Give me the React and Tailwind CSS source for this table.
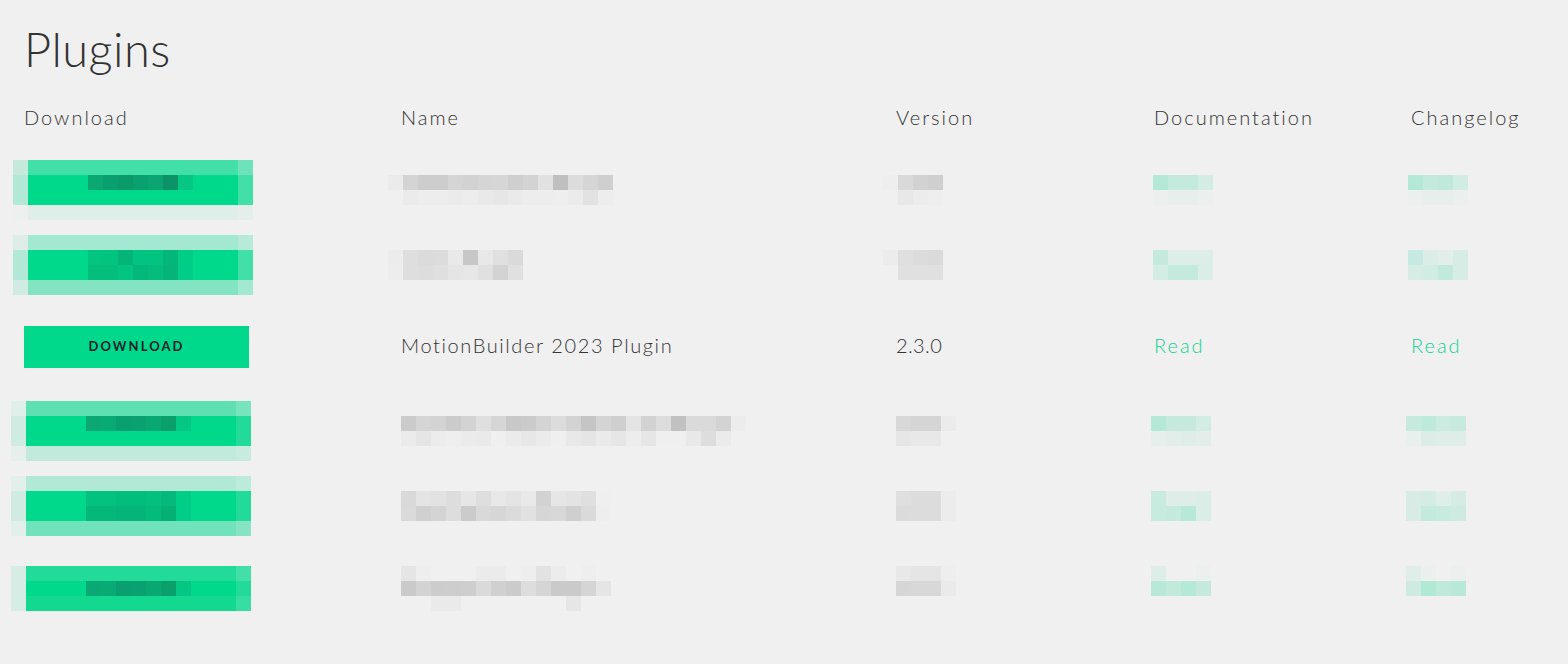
import React from "react";

const G = "#00d98b";

// pixelated (censored) rows, colours sampled cell by cell, 15px cells
const blurredRows = [
    {
        offset: { dl: "-mt-[6px] -ml-[11px]", other: "mt-[9px]", name: "-ml-[13px]", ver: "-ml-[13px]", doc: "-ml-[1px]", chg: "-ml-[3px]" },
        dl: [
            ["#c5eadc", ...Array(14).fill("#42dfa8"), "#6ee3bb"],
            ["#b2e9d6", G, G, G, G, "#0ca874", "#0a9f6e", "#0b9b6a", "#0aa170", "#0ba572", "#0c9468", "#05c682", G, G, G, "#42dfa8"],
            ["#b2e9d6", ...Array(14).fill(G), "#42dfa8"],
            ["#eef0ef", ...Array(14).fill("#e0eeea"), "#e6eeeb"],
        ],
        name: [
            ["#ebebeb", "#d4d4d4", "#cdcdcd", "#cdcdcd", "#d5d5d5", "#d2d2d2", "#d5d5d5", "#d6d6d6", "#cfcfcf", "#d3d3d3", "#e1e1e1", "#bfbfbf", "#dcdcdc", "#d5d5d5", "#cfcfcf"],
            ["#f0f0f0", "#ebebeb", "#ededed", "#ededed", "#ebebeb", "#ededed", "#e9e9e9", "#e6e6e6", "#eaeaea", "#ededed", "#ededed", "#eeeeee", "#ebebeb", "#e2e2e2", "#ededed"],
        ],
        ver: [
            ["#eeeeee", "#d9d9d9", "#d2d2d2", "#cfcfcf"],
            ["#f0f0f0", "#e8e8e8", "#ececec", "#eeeeee"],
        ],
        doc: [
            ["#b3e9d6", "#c3eadd", "#c3eadd", "#d3ece4"],
            ["#ebefee", "#e8eeec", "#e8eeec", "#ebefee"],
        ],
        chg: [
            ["#b3e9d6", "#c3eadd", "#c0e9db", "#d0ece3"],
            ["#ebefee", "#e8eeec", "#e8eeec", "#ebefee"],
        ],
    },
    {
        offset: { dl: "-mt-[11px] -ml-[11px]", other: "mt-[4px]", name: "-ml-[13px]", ver: "-ml-[13px]", doc: "-ml-[1px]", chg: "-ml-[3px]" },
        dl: [
            ["#ddeee8", ...Array(14).fill("#a3e9d1"), "#b7ead8"],
            ["#b2e9d6", G, G, G, G, "#03c57f", "#02c47e", "#05b478", "#01c482", "#02c380", "#05b67a", "#00ce87", G, G, G, "#42dfa8"],
            ["#b2e9d6", G, G, G, G, "#04bf7c", "#04be7c", "#02c582", "#03b87a", "#04bc7c", "#05b478", "#00cd87", G, G, G, "#42dfa8"],
            ["#d0ece2", ...Array(14).fill("#82e4c3"), "#a3e9d1"],
        ],
        name: [
            ["#ececec", "#dedede", "#dbdbdb", "#dcdcdc", "#e9e9e9", "#c7c7c7", "#e8e8e8", "#e0e0e0", "#dadada"],
            ["#ededed", "#dedede", "#dddddd", "#dfdfdf", "#e5e5e5", "#e7e7e7", "#e0e0e0", "#d3d3d3", "#e0e0e0"],
        ],
        ver: [
            ["#ececec", "#dfdfdf", "#dcdcdc", "#dadada"],
            ["#f0f0f0", "#e0e0e0", "#e0e0e0", "#e0e0e0"],
        ],
        doc: [
            ["#c3eadd", "#ddede8", "#ddede8", "#ddede8"],
            ["#d3ece4", "#c3eadd", "#c3eadd", "#dbede7"],
        ],
        chg: [
            ["#c6eadf", "#dcede7", "#e2eee9", "#d7ece5"],
            ["#d7ece5", "#d0ece3", "#c1eadc", "#d7ece5"],
        ],
    },
    null,
    {
        offset: { dl: "-mt-[5px] -ml-[13px]", other: "mt-[10px]", name: "ml-0", ver: "ml-0", doc: "-ml-[3px]", chg: "-ml-[5px]" },
        dl: [
            ["#dff0ea", ...Array(14).fill("#5fe0b3"), "#77e4bd"],
            ["#d0ece2", G, G, G, G, "#0ca874", "#08ab73", "#0a9f6e", "#0aa170", "#09a873", "#0a9f6b", "#05c682", G, G, G, "#22db98"],
            ["#d0ece2", ...Array(14).fill(G), "#22db98"],
            ["#e6efec", ...Array(14).fill("#c1eadc"), "#c8ebdf"],
        ],
        name: [
            ["#cbcbcb", "#d5d5d5", "#d3d3d3", "#cbcbcb", "#d3d3d3", "#dfdfdf", "#d6d6d6", "#c8c8c8", "#cbcbcb", "#d4d4d4", "#dcdcdc", "#d3d3d3", "#c5c5c5", "#d4d4d4", "#cfcfcf", "#e4e4e4", "#d2d2d2", "#dddddd", "#c1c1c1", "#dadada", "#dadada", "#d3d3d3", "#ececec"],
            ["#ebebeb", "#e5e5e5", "#ececec", "#eeeeee", "#ebebeb", "#eaeaea", "#efefef", "#ebebeb", "#e7e7e7", "#ebebeb", "#efefef", "#e8e8e8", "#e5e5e5", "#eaeaea", "#e6e6e6", "#ededed", "#e6e6e6", "#efefef", "#efefef", "#e8e8e8", "#dddddd", "#ebebeb", "#f0f0f0"],
        ],
        ver: [
            ["#d8d8d8", "#d5d5d5", "#d5d5d5", "#ebebeb"],
            ["#e6e6e6", "#e8e8e8", "#e8e8e8", "#f0f0f0"],
        ],
        doc: [
            ["#b3e9d6", "#c5eadd", "#c5eadd", "#d3ece4"],
            ["#e6efec", "#e3eeea", "#dfede8", "#e3eeea"],
        ],
        chg: [
            ["#c6eadd", "#bdeadb", "#ccebe1", "#c6eadd"],
            ["#e8efec", "#dcede7", "#dfede8", "#dfede8"],
        ],
    },
    {
        offset: { dl: "-mt-[10px] -ml-[13px]", other: "mt-[5px]", name: "ml-0", ver: "ml-0", doc: "-ml-[3px]", chg: "-ml-[5px]" },
        dl: [
            ["#e3efeb", ...Array(14).fill("#b1e9d6"), "#bcebdb"],
            ["#d0ece2", G, G, G, G, "#03c17e", "#03c17e", "#02be7d", "#02be7d", "#03c07e", "#04b97b", "#00ce87", G, G, G, "#22db98"],
            ["#d0ece2", G, G, G, G, "#04b87a", "#04b87a", "#05b478", "#05b478", "#03bb7b", "#05b074", "#00cd87", G, G, G, "#22db98"],
            ["#e2efeb", ...Array(14).fill("#70e3bc"), "#86e4c4"],
        ],
        name: [
            ["#d9d9d9", "#e4e4e4", "#e2e2e2", "#dddddd", "#e6e6e6", "#dedede", "#e8e8e8", "#e4e4e4", "#e9e9e9", "#d2d2d2", "#e6e6e6", "#e3e3e3", "#dfdfdf", "#efefef"],
            ["#dadada", "#d0d0d0", "#d4d4d4", "#dddddd", "#cbcbcb", "#d9d9d9", "#d6d6d6", "#dbdbdb", "#e1e1e1", "#d6d6d6", "#d8d8d8", "#cfcfcf", "#dadada", "#eeeeee"],
        ],
        ver: [
            ["#dfdfdf", "#dcdcdc", "#dcdcdc", "#ececec"],
            ["#dbdbdb", "#dcdcdc", "#dcdcdc", "#ececec"],
        ],
        doc: [
            ["#c8ebdf", "#dfede8", "#dfede8", "#dbede7"],
            ["#c8ebdf", "#c3eadd", "#b8e9d8", "#dbede7"],
        ],
        chg: [
            ["#d8ece5", "#d5ece4", "#e0eee9", "#d5ece4"],
            ["#d8ece5", "#c3eadd", "#c8ebdf", "#cdebe1"],
        ],
    },
    {
        offset: { dl: "mt-0 -ml-[13px]", other: "mt-0", name: "ml-0", ver: "ml-0", doc: "-ml-[3px]", chg: "-ml-[5px]" },
        dl: [
            ["#d5ede5", ...Array(14).fill("#22db98"), "#42dfa8"],
            ["#d5ede5", G, G, G, G, "#0aa874", "#08ab73", "#0a9f6e", "#0aa170", "#09a873", "#0a9f6b", "#05c682", G, G, G, "#22db98"],
            ["#d5ede5", ...Array(14).fill("#12d890"), "#36dea3"],
        ],
        name: [
            ["#e5e5e5", "#eeeeee", "#f0f0f0", "#f0f0f0", "#f0f0f0", "#ebebeb", "#ebebeb", "#f0f0f0", "#eeeeee", "#e2e2e2", "#ececec", "#f0f0f0", "#eeeeee", "#f0f0f0"],
            ["#cacaca", "#d3d3d3", "#cccccc", "#cdcdcd", "#cecece", "#dadada", "#d0d0d0", "#cbcbcb", "#dddddd", "#d5d5d5", "#cacaca", "#cacaca", "#d5d5d5", "#e5e5e5"],
            ["#f0f0f0", "#f0f0f0", "#eaeaea", "#eaeaea", "#f0f0f0", "#f0f0f0", "#f0f0f0", "#f0f0f0", "#f0f0f0", "#f0f0f0", "#f0f0f0", "#e6e6e6", "#f0f0f0", "#f0f0f0"],
        ],
        ver: [
            ["#e8e8e8", "#e5e5e5", "#e5e5e5", "#eeeeee"],
            ["#d6d6d6", "#d8d8d8", "#d8d8d8", "#eaeaea"],
        ],
        doc: [
            ["#ddede8", "#f0f0f0", "#f0f0f0", "#ebefee"],
            ["#b8e9d8", "#c1eadb", "#b3e9d6", "#c5eadd"],
        ],
        chg: [
            ["#e0eee9", "#ebefee", "#f0f0f0", "#ebefee"],
            ["#cdebe1", "#b0e9d4", "#bfeadb", "#b8e9d8"],
        ],
    },
];

function Mosaic({ rows, className }) {
    return (
        <div className={`flex flex-col ${className}`}>
            {rows.map((row, i) => (
                <div key={i} className="flex">
                    {row.map((c, j) => (
                        <div key={j} className="w-[15px] h-[15px] shrink-0" style={{ backgroundColor: c }} />
                    ))}
                </div>
            ))}
        </div>
    );
}

function BlurredRow({ data }) {
    const o = data.offset;
    return (
        <div className="flex items-start h-[80px]">
            <div className="w-[377px] shrink-0">
                <Mosaic rows={data.dl} className={o.dl} />
            </div>
            <div className={`w-[495px] shrink-0 ${o.other}`}>
                <Mosaic rows={data.name} className={o.name} />
            </div>
            <div className={`w-[258px] shrink-0 ${o.other}`}>
                <Mosaic rows={data.ver} className={o.ver} />
            </div>
            <div className={`w-[257px] shrink-0 ${o.other}`}>
                <Mosaic rows={data.doc} className={o.doc} />
            </div>
            <div className={`flex-1 ${o.other}`}>
                <Mosaic rows={data.chg} className={o.chg} />
            </div>
        </div>
    );
}

function PluginRow() {
    return (
        <div className="flex items-start h-[80px] text-[20px] font-light text-[#333] tracking-[0.08em]">
            <div className="w-[377px] shrink-0">
                <button className="w-[225px] h-[42px] bg-[#00d98b] text-[#1d1d2b] text-[13px] font-bold tracking-[0.16em]">
                    DOWNLOAD
                </button>
            </div>
            <div className="w-[495px] shrink-0 h-[38px] flex items-center">MotionBuilder 2023 Plugin</div>
            <div className="w-[258px] shrink-0 h-[38px] flex items-center tracking-[0.02em]">2.3.0</div>
            <div className="w-[257px] shrink-0 h-[38px] flex items-center text-[#10d392] tracking-[0.1em]">Read</div>
            <div className="flex-1 h-[38px] flex items-center text-[#10d392] tracking-[0.1em]">Read</div>
        </div>
    );
}

export default function App() {
    return (
        <div className="min-h-screen bg-[#f0f0f0] pl-[24px] pt-[20px] font-['Lato','Liberation_Sans',sans-serif] overflow-hidden">
            <h1 className="text-[47px] leading-[59px] font-light text-[#333] tracking-[0.01em]">Plugins</h1>
            <div className="flex h-[87px] pt-[23px] text-[20px] font-light text-[#333] tracking-[0.1em]">
                <div className="w-[377px] shrink-0">Download</div>
                <div className="w-[495px] shrink-0">Name</div>
                <div className="w-[258px] shrink-0">Version</div>
                <div className="w-[257px] shrink-0">Documentation</div>
                <div className="flex-1">Changelog</div>
            </div>
            {blurredRows.map((r, i) => (r ? <BlurredRow key={i} data={r} /> : <PluginRow key={i} />))}
        </div>
    );
}
